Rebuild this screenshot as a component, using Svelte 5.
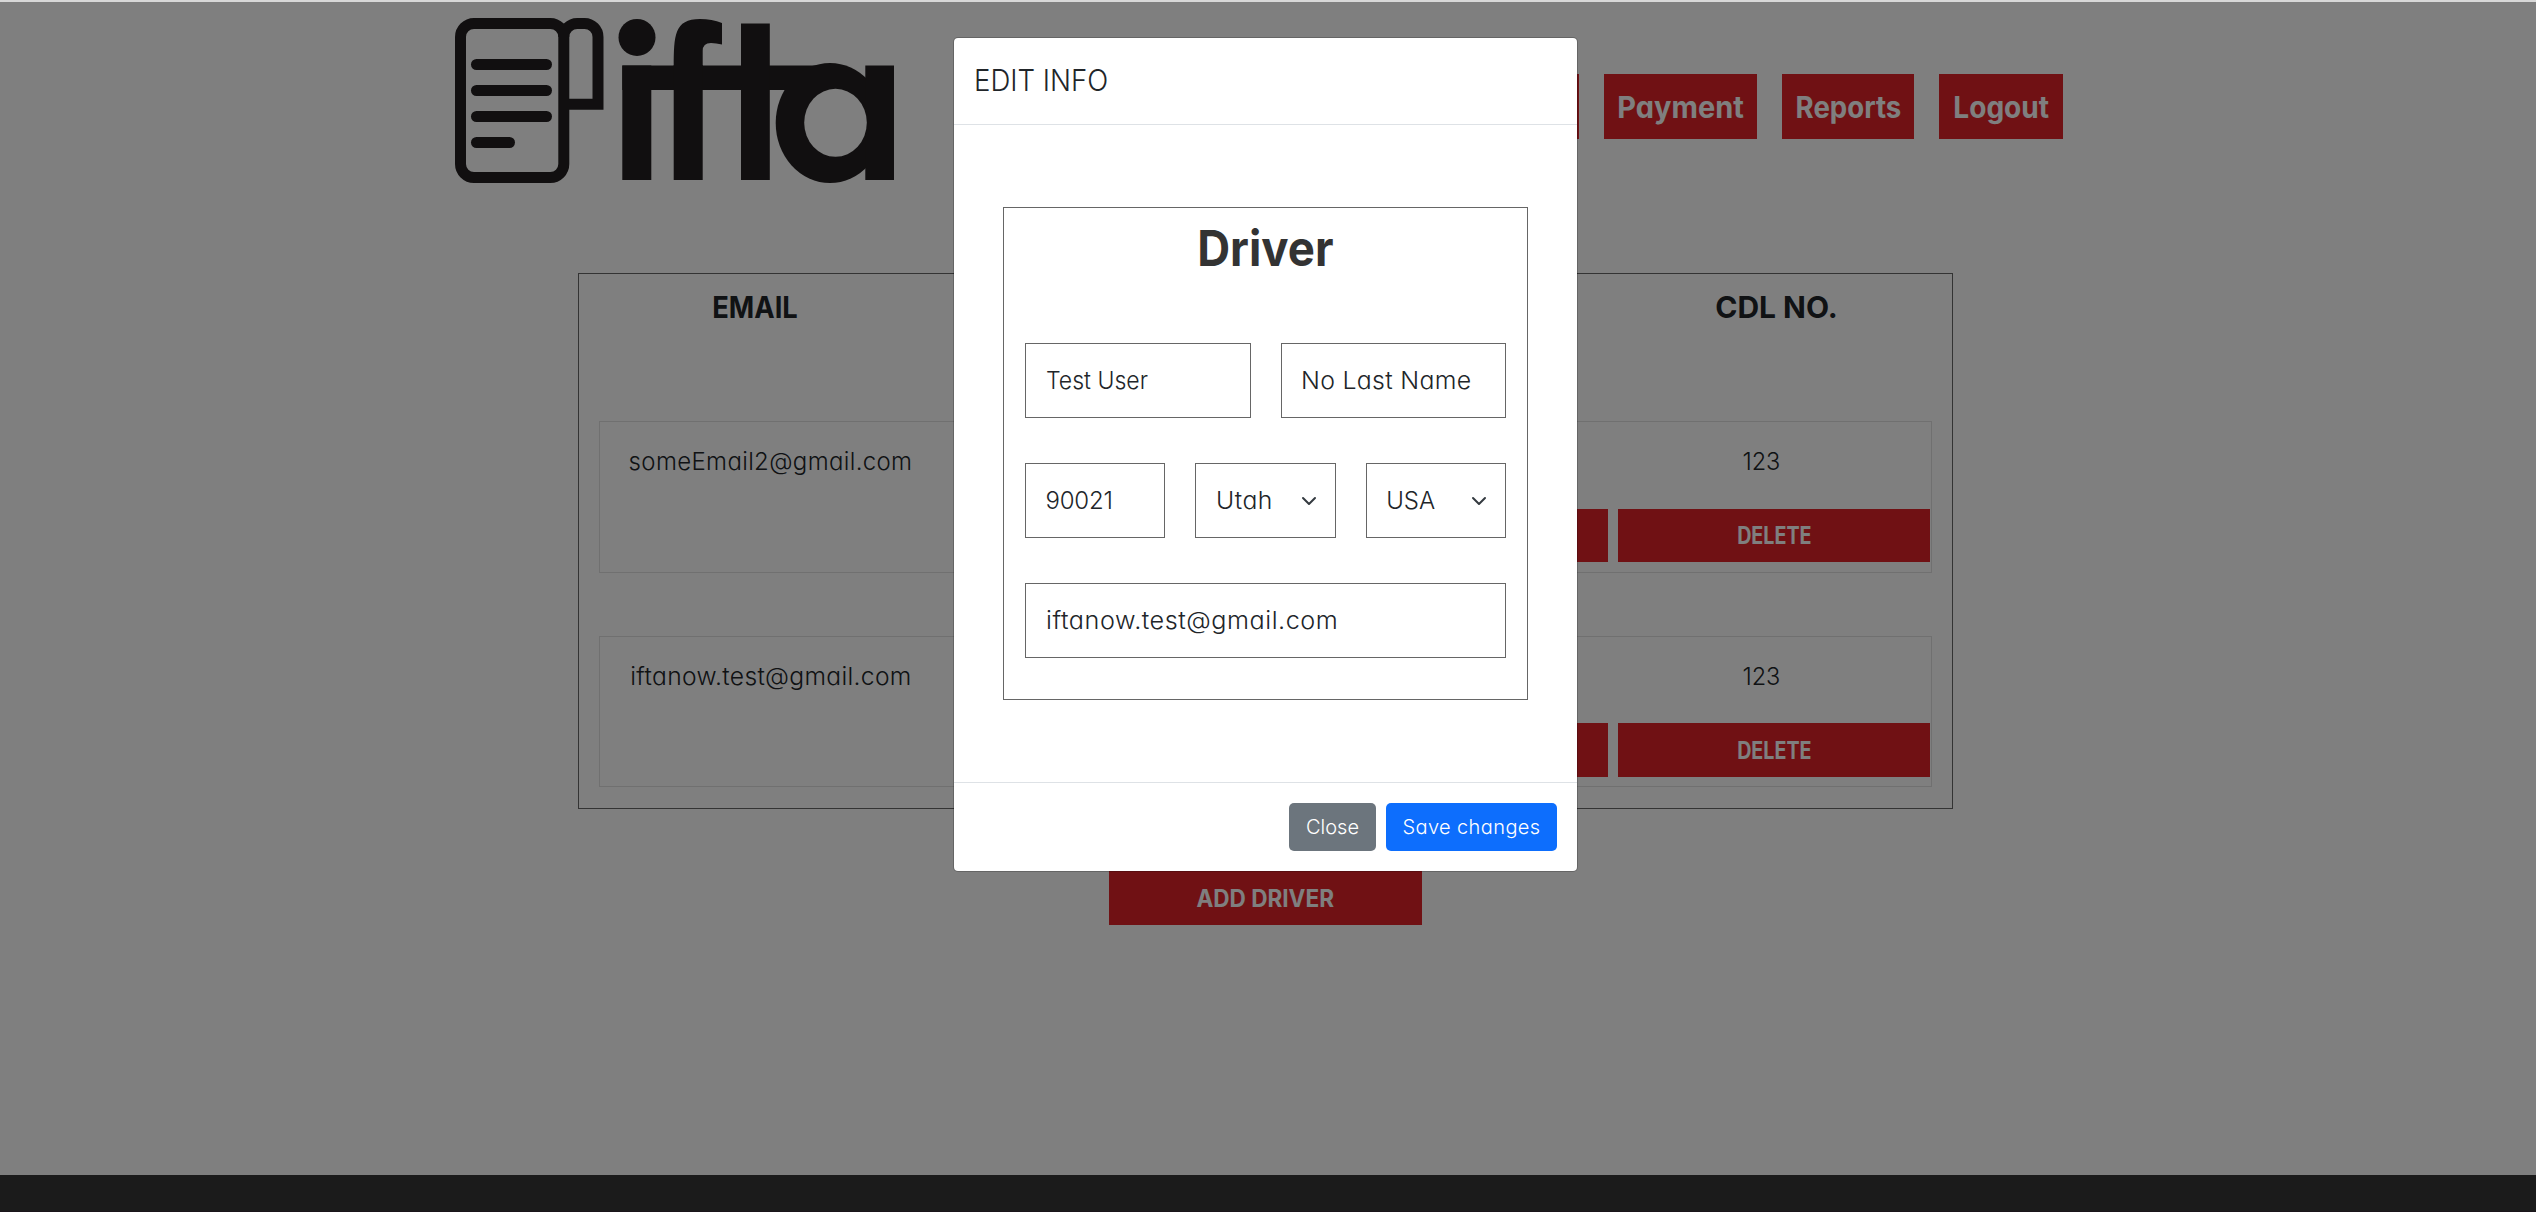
<script>
  const drivers = [
    { email: 'someEmail2@gmail.com', cdl: '123', tone: 'first' },
    { email: 'iftanow.test@gmail.com', cdl: '123', tone: 'second' }
  ];
</script>

<div class="strip"></div>
<div class="page">
  <header>
    <svg class="logo" viewBox="15 18 440 165" aria-label="ifta">
      <g fill="none" stroke="#231f20" stroke-width="11">
        <rect x="20.5" y="23.5" width="103.3" height="154" rx="13.5" />
        <path d="M123.8 37a13.5 13.5 0 0 1 13.5-13.5h7.2a13.5 13.5 0 0 1 13.5 13.5V104.3H124" />
      </g>
      <g fill="#231f20">
        <rect x="31" y="59" width="81" height="11" rx="5.5" />
        <rect x="31" y="85" width="81" height="11" rx="5.5" />
        <rect x="31" y="111" width="81" height="11" rx="5.5" />
        <rect x="31" y="137" width="44" height="11" rx="5.5" />
        <circle cx="197" cy="37.4" r="18.5" />
        <rect x="182.3" y="65.5" width="29" height="114.5" />
        <rect x="182.3" y="65.5" width="200" height="24.5" />
        <rect x="233.7" y="65" width="29" height="115" />
        <path d="M233.7 66C234 36 234 19 260 19Q272 19 282 23V44.5Q276 43 271 43Q262.7 43 262.7 51V66Z" />
        <rect x="301" y="23.5" width="28.8" height="156.5" />
        <ellipse cx="390" cy="123" rx="54.3" ry="60" />
        <rect x="425.3" y="65.5" width="28.7" height="114.5" />
      </g>
      <ellipse cx="395.5" cy="122.8" rx="31.3" ry="34" fill="#fff" />
    </svg>
    <nav>
      <span class="navlink blank"></span>
      <span class="navlink w1"><b class="t-pay">Payment</b></span>
      <span class="navlink w2"><b class="t-rep">Reports</b></span>
      <span class="navlink w3"><b class="t-log">Logout</b></span>
    </nav>
  </header>

  <section class="table">
    <div class="head">
      <span><b class="t-email">EMAIL</b></span>
      <span><b class="t-cdl">CDL NO.</b></span>
    </div>
    {#each drivers as d}
      <div class="row">
        <div class="info">
          <span class="c1"><i class={d.tone}>{d.email}</i></span>
          <span class="c2"><i class="num">{d.cdl}</i></span>
        </div>
        <div class="actions">
          <span class="btn"></span>
          <span class="btn"><b class="t-del">DELETE</b></span>
        </div>
      </div>
    {/each}
  </section>
  <div class="add btn"><b class="t-add">ADD DRIVER</b></div>
  <footer></footer>
  <div class="backdrop"></div>
</div>

<div class="modal">
  <div class="mhead"><i class="t-edit">EDIT INFO</i></div>
  <div class="mbody">
    <div class="form">
      <h1><b class="t-driver">Driver</b></h1>
      <div class="fields">
        <div class="field"><i class="t-test">Test User</i></div>
        <div class="field"><i class="t-last">No Last Name</i></div>
      </div>
      <div class="fields">
        <div class="field"><i class="t-zip">90021</i></div>
        <div class="field"><i class="t-utah">Utah</i>
          <svg class="chev" viewBox="0 0 16 16"><path d="M2 5l6 6 6-6" /></svg></div>
        <div class="field"><i>USA</i>
          <svg class="chev" viewBox="0 0 16 16"><path d="M2 5l6 6 6-6" /></svg></div>
      </div>
      <div class="fields">
        <div class="field"><i class="t-mail">iftanow.test@gmail.com</i></div>
      </div>
    </div>
  </div>
  <div class="mfoot">
    <span class="mbtn close"><i>Close</i></span>
    <span class="mbtn save"><i class="t-save">Save changes</i></span>
  </div>
</div>

<style>
  :global(body) {
    margin: 0;
    background: #fff;
    font-family: Inter, "Open Sans", sans-serif;
    font-feature-settings: "cv11", "calt" 0;
    color: #212529;
    overflow: hidden;
  }
  * { box-sizing: border-box; }
  i { font-style: normal; font-weight: 300; white-space: nowrap; }
  b { font-weight: 700; white-space: nowrap; }
  i, b { display: inline-block; }
  .t-pay { transform: scaleX(0.965); }
  .t-rep { transform: scaleX(0.92); }
  .t-log { transform: scaleX(0.935); }
  .t-email { transform: scaleX(0.91); }
  .t-del { transform: scaleX(0.82); }
  .t-add { transform: scaleX(0.94); }
  .t-driver { transform: scaleX(0.93); }
  .t-edit { transform: scaleX(0.92); transform-origin: left; }
  .t-test { transform: scaleX(0.96); transform-origin: left; }
  .t-last { letter-spacing: 0.3px; transform: scaleX(1.035); transform-origin: left; }
  .t-zip { letter-spacing: -0.2px; }
  .t-utah { letter-spacing: 0.5px; transform: scaleX(1.03); transform-origin: left; }
  .t-mail { letter-spacing: 0.5px; transform: scaleX(1.05); transform-origin: left; }
  .t-save { letter-spacing: 0.4px; }
  .first { letter-spacing: 0.35px; }
  .second { letter-spacing: 0.3px; transform: scaleX(1.027); }
  .num { transform: translateX(-1px) scaleX(0.98); }
  .strip { height: 2px; background: #d8d8d8; }
  .page {
    position: relative;
    height: 1210px;
    display: flex;
    flex-direction: column;
    background: #fff;
  }
  .backdrop { position: absolute; inset: 0; background: rgba(0, 0, 0, 0.5); }

  header {
    width: 1608px;
    height: 271px;
    margin-left: 455px;
    padding-top: 16px;
    display: flex;
    justify-content: space-between;
    align-items: flex-start;
  }
  .logo { width: 440px; height: 165px; display: block; }
  nav { display: flex; gap: 25px; margin-top: 56px; }
  .navlink {
    height: 65px;
    display: flex;
    align-items: center;
    justify-content: center;
    background: #e02229;
    color: #fff;
    font-size: 30px;
  }
  .blank { width: 132px; }
  .w1 { width: 153px; }
  .w2 { width: 132px; }
  .w3 { width: 124px; }

  .table {
    width: 1375px;
    height: 536px;
    flex: none;
    margin-left: 578px;
    border: 1px solid #666;
    padding: 0 20px;
  }
  .head {
    height: 147px;
    margin: 0 -20px;
    display: flex;
    justify-content: space-between;
    font-size: 30px;
    line-height: 66px;
    text-align: center;
  }
  .head span { width: 351px; }
  .row {
    height: 151.8px;
    border: 1px solid #e0e0e0;
    margin-bottom: 62.8px;
  }
  .info {
    display: flex;
    justify-content: space-between;
    height: 86.6px;
    font-size: 24px;
    line-height: 79px;
    text-align: center;
  }
  .c1 { width: 341px; }
  .c2 { width: 338px; }
  .actions { display: flex; justify-content: flex-end; gap: 10px; padding-right: 1px; }
  .btn {
    width: 312px;
    height: 53.8px;
    display: flex;
    align-items: center;
    justify-content: center;
    background: #e02229;
    color: #fff;
    font-size: 24px;
  }
  .add { flex: none; width: 313px; height: 54px; margin: 62px 0 0 1109px; }
  footer { margin-top: auto; height: 37px; background: #373737; border-bottom: 1px solid #342a34; }

  .modal {
    position: absolute;
    left: 953px;
    top: 37px;
    width: 625px;
    height: 835px;
    display: flex;
    flex-direction: column;
    background: #fff;
    background-clip: padding-box;
    border: 1px solid rgba(0, 0, 0, 0.2);
    border-radius: 5px;
  }
  .mhead {
    height: 87px;
    padding-left: 20px;
    font-size: 30px;
    line-height: 84px;
    border-bottom: 1px solid #dee2e6;
  }
  .mbody { flex: 1; padding: 82px 49px 0; }
  .form {
    height: 493px;
    border: 1px solid #666;
    padding: 0 21px;
    display: flex;
    flex-direction: column;
    gap: 45px;
  }
  h1 {
    height: 90px;
    margin: 0;
    text-align: center;
    font-size: 49px;
    line-height: 82px;
    color: #333;
  }
  .fields { display: flex; gap: 30px; }
  .field {
    flex: 1 1 0;
    min-width: 0;
    height: 75px;
    padding: 0 17.5px 0 19.5px;
    display: flex;
    align-items: center;
    justify-content: space-between;
    border: 1px solid #666;
    font-size: 24px;
  }
  .chev {
    width: 16px;
    height: 16px;
    fill: none;
    stroke: #343a40;
    stroke-width: 2;
    stroke-linecap: round;
    stroke-linejoin: round;
  }
  .mfoot {
    height: 89px;
    padding: 20px 20px 0 0;
    display: flex;
    justify-content: flex-end;
    gap: 10px;
    border-top: 1px solid #dee2e6;
  }
  .mbtn {
    height: 48px;
    display: flex;
    align-items: center;
    justify-content: center;
    border-radius: 5px;
    color: #fff;
    font-size: 20px;
  }
  .close { width: 87px; background: #6c757d; }
  .save { width: 171px; background: #0d6efd; }
</style>
